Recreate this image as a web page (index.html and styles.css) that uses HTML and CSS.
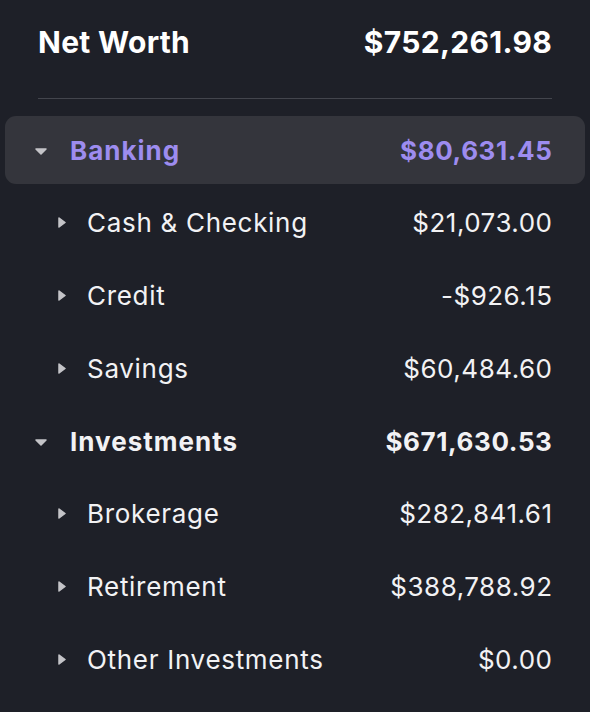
FILE: index.html
```html
<!DOCTYPE html>
<html lang="en">
<head>
  <meta charset="UTF-8" />
  <meta name="viewport" content="width=device-width, initial-scale=1.0"/>
  <title>Net Worth</title>
  <link rel="stylesheet" href="styles.css">
</head>
<body>

  <div class="summary">
    <div class="total">
      <span>Net Worth</span>
      <span>$752,261.98</span>
    </div>
    <div class="divider"></div>

    <div class="list">
      <div class="row group active">
        <svg class="caret-down" viewBox="0 0 12 7"><polygon points="1,1 11,1 6,6" /></svg>
        <span class="name">Banking</span>
        <span class="amount">$80,631.45</span>
      </div>
      <div class="row child">
        <svg class="caret-right" viewBox="0 0 8 11"><polygon points="1,1 7,5.5 1,10" /></svg>
        <span class="name">Cash &amp; Checking</span>
        <span class="amount">$21,073.00</span>
      </div>
      <div class="row child">
        <svg class="caret-right" viewBox="0 0 8 11"><polygon points="1,1 7,5.5 1,10" /></svg>
        <span class="name">Credit</span>
        <span class="amount">-$926.15</span>
      </div>
      <div class="row child">
        <svg class="caret-right" viewBox="0 0 8 11"><polygon points="1,1 7,5.5 1,10" /></svg>
        <span class="name">Savings</span>
        <span class="amount">$60,484.60</span>
      </div>

      <div class="row group">
        <svg class="caret-down" viewBox="0 0 12 7"><polygon points="1,1 11,1 6,6" /></svg>
        <span class="name">Investments</span>
        <span class="amount">$671,630.53</span>
      </div>
      <div class="row child">
        <svg class="caret-right" viewBox="0 0 8 11"><polygon points="1,1 7,5.5 1,10" /></svg>
        <span class="name">Brokerage</span>
        <span class="amount">$282,841.61</span>
      </div>
      <div class="row child">
        <svg class="caret-right" viewBox="0 0 8 11"><polygon points="1,1 7,5.5 1,10" /></svg>
        <span class="name">Retirement</span>
        <span class="amount">$388,788.92</span>
      </div>
      <div class="row child">
        <svg class="caret-right" viewBox="0 0 8 11"><polygon points="1,1 7,5.5 1,10" /></svg>
        <span class="name">Other Investments</span>
        <span class="amount">$0.00</span>
      </div>
    </div>
  </div>

</body>
</html>
```

FILE: styles.css
```css
body {
  margin: 0;
  font-family: Inter, 'Noto Sans', sans-serif;
  background: #1e2028;
  color: #f2f2f4;
  width: 590px;
  height: 712px;
  overflow: hidden;
}

.total {
  display: flex;
  justify-content: space-between;
  align-items: center;
  height: 84px;
  padding: 0 38px;
  font-size: 30px;
  font-weight: 700;
  letter-spacing: 0.3px;
  color: #fff;
}

.divider {
  height: 1px;
  margin: 14px 38px 0;
  background: #43454d;
}

.list {
  display: flex;
  flex-direction: column;
  gap: 4.8px;
  margin: 17px 5px 0;
}

.row {
  display: flex;
  align-items: center;
  height: 68px;
  padding: 0 33px 0 30px;
  border-radius: 11px;
  font-size: 26px;
  letter-spacing: 0.5px;
}

.row .name {
  letter-spacing: 0.7px;
}

.row .amount {
  margin-left: auto;
  margin-right: -0.5px;
}

.group {
  font-weight: 700;
  letter-spacing: 0.6px;
}

.group .name {
  letter-spacing: 1px;
}

.active {
  background: #34353c;
  color: #9d8cef;
}

.child {
  padding-left: 53px;
}

.row svg {
  fill: #c4c4c8;
  stroke: #c4c4c8;
  stroke-width: 1.5;
  stroke-linejoin: round;
}

.caret-down {
  width: 12px;
  height: 7px;
  margin: 2px 23px 0 0;
}

.caret-right {
  width: 8px;
  height: 11px;
  margin-right: 21px;
}
```
